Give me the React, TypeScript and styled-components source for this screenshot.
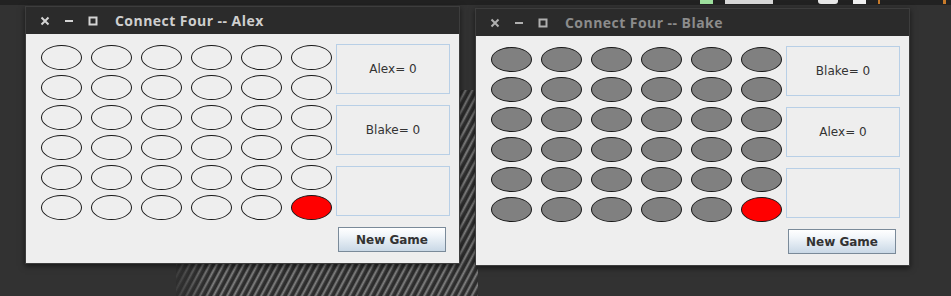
import React from 'react'
import styled, { createGlobalStyle } from 'styled-components'

const GlobalStyle = createGlobalStyle`
  html, body {
    margin: 0;
    padding: 0;
    background: #313131;
  }
`

const ROWS = 6
const COLS = 6

interface Player {
  name: string;
  opponent: string;
  active: boolean;
  filled: boolean;
  left: number;
  top: number;
}

const players: Player[] = [
  { name: 'Alex', opponent: 'Blake', active: true, filled: false, left: 25, top: 6 },
  { name: 'Blake', opponent: 'Alex', active: false, filled: true, left: 475, top: 8 },
]

const Desktop = styled.div`
  position: relative;
  width: 951px;
  height: 296px;
  overflow: hidden;
  background: #323232;
`

const TopBar = styled.div`
  height: 5px;
  background: #222222;
  display: flex;
  align-items: flex-start;
  padding-left: 700px;
`

const TrayItem = styled.span<{ $w: number; $c: string; $ml: number; $round?: boolean }>`
  display: block;
  width: ${(p) => p.$w}px;
  height: 4px;
  margin-left: ${(p) => p.$ml}px;
  background: ${(p) => p.$c};
  border-radius: ${(p) => (p.$round ? '0 0 3px 3px' : '0')};
`

// the grey photo of the wallpaper peeking out between the windows
const Wallpaper = styled.div`
  position: absolute;
  left: 176px;
  top: 90px;
  width: 302px;
  height: 206px;
  background:
    linear-gradient(165deg, rgba(14, 14, 14, 0.95) 0%, rgba(14, 14, 14, 0.35) 22%, rgba(14, 14, 14, 0.1) 40%),
    linear-gradient(90deg, rgba(50, 50, 50, 0.8) 0%, rgba(50, 50, 50, 0) 12%),
    repeating-linear-gradient(
      118deg,
      #333333 0px,
      #2e2e2e 2px,
      #6c6c6c 3px,
      #8e8e8e 4px,
      #555555 5px,
      #333333 6px
    );
  clip-path: polygon(0 175px, 270px 0, 100% 0, 100% 100%, 0 100%);
`

const Window = styled.div`
  position: absolute;
  width: 433px;
  border: 1px solid #3d3d3d;
  box-shadow: 0 2px 6px rgba(0, 0, 0, 0.55);
  background: #eeeeee;
`

const TitleBar = styled.div<{ $active: boolean }>`
  height: 27px;
  background: #2b2b2b;
  display: flex;
  align-items: center;
  padding-left: 14px;
  color: ${(p) => (p.$active ? '#cfcfcf' : '#8c8c8c')};
`

const WinButtons = styled.div`
  display: flex;
  align-items: center;
  gap: 14px;
  margin-right: 17px;
  svg {
    display: block;
  }
`

const Title = styled.span`
  font-family: 'Open Sans', 'DejaVu Sans', sans-serif;
  font-weight: 700;
  font-size: 14px;
  letter-spacing: 0.45px;
`

const Content = styled.div`
  display: flex;
  align-items: flex-start;
  gap: 4px;
  padding: 10px 8px 11px 15px;
`

const Board = styled.div`
  display: grid;
  grid-template-columns: repeat(${COLS}, 41px);
  grid-auto-rows: 25px;
  column-gap: 9px;
  row-gap: 5px;
  margin-top: 1px;
`

const Cell = styled.div<{ $fill: string }>`
  box-sizing: border-box;
  width: 41px;
  height: 25px;
  border-radius: 50%;
  border: 1px solid #161616;
  background: ${(p) => p.$fill};
`

const Side = styled.div`
  display: flex;
  flex-direction: column;
  gap: 11px;
`

const ScoreBox = styled.div`
  box-sizing: border-box;
  width: 114px;
  height: 50px;
  border: 1px solid #b8cfe6;
  display: flex;
  align-items: center;
  justify-content: center;
  font-family: 'DejaVu Sans', sans-serif;
  font-size: 12px;
  color: #333333;
`

const NewGame = styled.button`
  box-sizing: border-box;
  width: 108px;
  height: 25px;
  margin-left: 2px;
  border: 1px solid #7a8a99;
  border-radius: 0;
  background: linear-gradient(#ffffff 0%, #f2f6fa 30%, #c9d8e6 100%);
  font-family: 'DejaVu Sans', sans-serif;
  font-weight: 700;
  font-size: 12px;
  color: #333333;
  padding: 0;
  cursor: pointer;
`

const WindowControls: React.FC<{ active: boolean }> = ({ active }) => {
  const c = active ? '#d4d4d4' : '#b0b0b0'
  return (
    <WinButtons>
      <svg width="10" height="10" viewBox="0 0 10 10">
        <path d="M1.5 1.5 L8.5 8.5 M8.5 1.5 L1.5 8.5" stroke={c} strokeWidth="2" />
      </svg>
      <svg width="10" height="10" viewBox="0 0 10 10">
        <path d="M1 5 H9" stroke={c} strokeWidth="2" />
      </svg>
      <svg width="10" height="10" viewBox="0 0 10 10">
        <rect x="1.5" y="1.5" width="7" height="7" fill="none" stroke={c} strokeWidth="2" />
      </svg>
    </WinButtons>
  )
}

const GameWindow: React.FC<{ player: Player }> = ({ player }) => {
  const cells = []
  for (let r = 0; r < ROWS; r++) {
    for (let c = 0; c < COLS; c++) {
      const last = r === ROWS - 1 && c === COLS - 1
      const fill = last ? '#ff0000' : player.filled ? '#808080' : '#eeeeee'
      cells.push(<Cell key={`${r}-${c}`} $fill={fill} />)
    }
  }

  return (
    <Window style={{ left: player.left, top: player.top }}>
      <TitleBar $active={player.active}>
        <WindowControls active={player.active} />
        <Title>Connect Four -- {player.name}</Title>
      </TitleBar>
      <Content>
        <Board>{cells}</Board>
        <Side>
          <ScoreBox>{player.name}= 0</ScoreBox>
          <ScoreBox>{player.opponent}= 0</ScoreBox>
          <ScoreBox />
          <NewGame>New Game</NewGame>
        </Side>
      </Content>
    </Window>
  )
}

export default function App() {
  return (
    <>
      <GlobalStyle />
      <Desktop>
        <TopBar>
          <TrayItem $ml={0} $w={13} $c="#9ee09e" />
          <TrayItem $ml={12} $w={48} $c="#d8d8d8" />
          <TrayItem $ml={45} $w={20} $c="#e8e8e8" $round />
          <TrayItem $ml={15} $w={13} $c="#f0f0f0" />
          <TrayItem $ml={12} $w={2} $c="#c77a2a" />
          <TrayItem $ml={63} $w={3} $c="#c77a2a" />
        </TopBar>
        <Wallpaper />
        {players.map((p) => (
          <GameWindow key={p.name} player={p} />
        ))}
      </Desktop>
    </>
  )
}
